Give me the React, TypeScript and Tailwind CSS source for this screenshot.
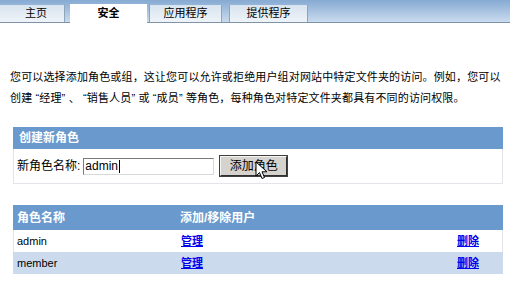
import React from "react";

function Cursor() {
  return (
    <svg className="absolute left-[34px] top-[4px]" width="14" height="20" viewBox="0 0 14 20">
      <path d="M1 1 L1 15 L4.5 11.5 L7 17.5 L9.5 16.5 L7 10.8 L12 10.8 Z" fill="#fff" stroke="#000" strokeWidth="1" strokeLinejoin="miter" />
    </svg>
  );
}

export default function App() {
  const font = "font-['Liberation_Sans','Noto_Sans_CJK_SC',sans-serif]";
  return (
    <div className={`w-[510px] h-[284px] bg-white overflow-hidden text-black ${font}`}>
      {/* Tab bar */}
      <div className="h-[23px] bg-gradient-to-b from-[#86aad2] to-[#cadbee] border-b border-[#7e93a8] flex items-end">
        <div className="w-[65px] h-[17px] bg-gradient-to-b from-[#d8e4f0] to-[#eef3f8] border-r border-[#8ea4b8] flex items-center justify-center text-[11px] leading-none pl-[8px]">主页</div>
        <div className="ml-[5px] w-[77px] bg-white flex items-center justify-center text-[11px] leading-none font-bold -mb-px h-[19px]">安全</div>
        <div className="ml-[2px] w-[73px] h-[17px] bg-gradient-to-b from-[#d8e4f0] to-[#eef3f8] border-l border-r border-[#8ea4b8] flex items-center justify-center text-[11px] leading-none">应用程序</div>
        <div className="ml-[7px] w-[79px] h-[17px] bg-gradient-to-b from-[#d8e4f0] to-[#eef3f8] border-l border-r border-[#8ea4b8] flex items-center justify-center text-[11px] leading-none">提供程序</div>
      </div>

      {/* Description */}
      <p className="mt-[44px] ml-[10px] text-[11px] tracking-[0.15px] leading-[21px] whitespace-nowrap">
        您可以选择添加角色或组，这让您可以允许或拒绝用户组对网站中特定文件夹的访问。例如，您可以
        <br />
        创建 “经理” 、 “销售人员” 或 “成员” 等角色，每种角色对特定文件夹都具有不同的访问权限。
      </p>

      {/* Create new role */}
      <div className="mt-[18px] ml-[13px] w-[490px]">
        <div className="h-[22px] bg-[#6a9acd] text-white font-bold text-[12px] flex items-center pl-[6px]">创建新角色</div>
        <div className="h-[35px] border-l border-r border-b border-[#e2e6ea] flex items-center pl-[3px] text-[12px]">
          <span>新角色名称:</span>
          <div className="ml-[3px] w-[131px] h-[17px] border border-t-[#7a7a7a] border-l-[#7a7a7a] border-r-[#d8d8d8] border-b-[#d8d8d8] bg-white flex items-center pl-[1px] text-[12px] leading-none">
            admin<span className="inline-block w-px h-[13px] bg-black ml-px" />
          </div>
          <div className="relative ml-[6px] w-[67px] h-[20px] bg-[#d6d3ce] border border-t-[#f4f4f4] border-l-[#f4f4f4] border-r-[#303030] border-b-[#303030] outline outline-1 outline-[#404040] flex items-center justify-center text-[12px] leading-none">
            添加角色
            <Cursor />
          </div>
        </div>
      </div>

      {/* Roles table */}
      <div className="mt-[21px] ml-[13px] w-[490px] text-[11px]">
        <div className="h-[25px] bg-[#6a9acd] text-white font-bold text-[12px] flex items-center">
          <div className="w-[167px] pl-[4px]">角色名称</div>
          <div>添加/移除用户</div>
        </div>
        <div className="h-[22px] bg-white flex items-center border-l border-r border-[#e2e6ea]">
          <div className="w-[167px] pl-[3px]">admin</div>
          <a className="w-[276px] text-[#0000ee] underline font-bold text-[11px]">管理</a>
          <a className="text-[#0000ee] underline font-bold text-[11px]">删除</a>
        </div>
        <div className="h-[22px] bg-[#cbdaec] flex items-center">
          <div className="w-[168px] pl-[4px]">member</div>
          <a className="w-[276px] text-[#0000ee] underline font-bold text-[11px]">管理</a>
          <a className="text-[#0000ee] underline font-bold text-[11px]">删除</a>
        </div>
      </div>
    </div>
  );
}
